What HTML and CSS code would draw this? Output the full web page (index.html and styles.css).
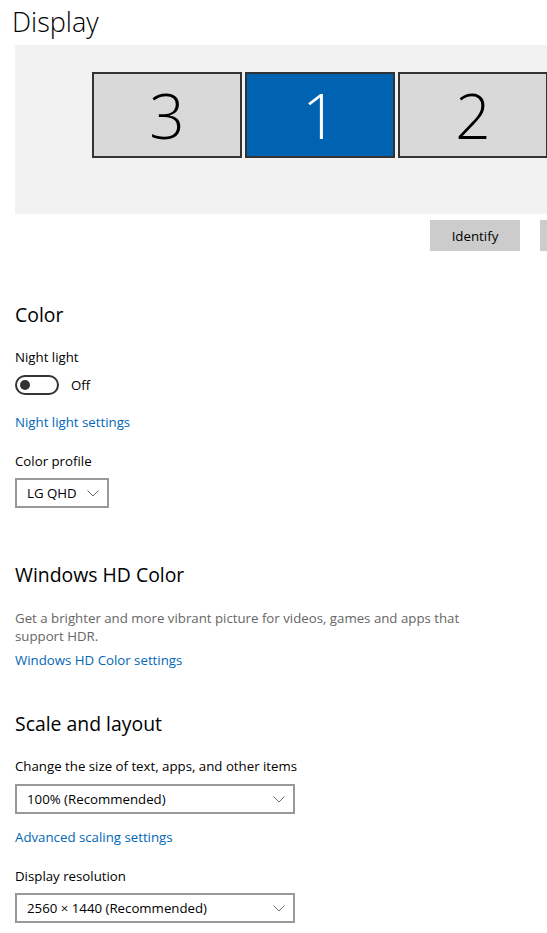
FILE: index.html
```html
<!DOCTYPE html>
<html>
<head>
<meta charset="utf-8">
<link rel="stylesheet" href="styles.css">
</head>
<body>
<div class="page">
  <h1 class="title">Display</h1>
  <div class="arrange">
    <div class="monitors">
      <div class="mon">3</div>
      <div class="mon active">1</div>
      <div class="mon">2</div>
    </div>
  </div>
  <div class="btnrow">
    <div class="btn">Identify</div>
    <div class="btn btn-cut"></div>
  </div>

  <h2 class="heading h-color">Color</h2>
  <div class="label l-night">Night light</div>
  <div class="toggle-row">
    <div class="toggle"><span class="knob"></span></div>
    <span class="toggle-text">Off</span>
  </div>
  <a class="link l-nightset">Night light settings</a>
  <div class="label l-profile">Color profile</div>
  <div class="select small d-profile"><span>LG QHD</span><svg class="chev" width="12" height="7" viewBox="0 0 12 7"><path d="M0.5 0.5 L6 6 L11.5 0.5" fill="none" stroke="#6b6b6b" stroke-width="1"/></svg></div>

  <h2 class="heading h-hd">Windows HD Color</h2>
  <p class="desc">Get a brighter and more vibrant picture for videos, games and apps that support HDR.</p>
  <a class="link l-hdset">Windows HD Color settings</a>

  <h2 class="heading h-scale">Scale and layout</h2>
  <div class="label l-size">Change the size of text, apps, and other items</div>
  <div class="select wide d-scale"><span>100% (Recommended)</span><svg class="chev" width="12" height="7" viewBox="0 0 12 7"><path d="M0.5 0.5 L6 6 L11.5 0.5" fill="none" stroke="#6b6b6b" stroke-width="1"/></svg></div>
  <a class="link l-adv">Advanced scaling settings</a>
  <div class="label l-res">Display resolution</div>
  <div class="select wide d-res"><span>2560 × 1440 (Recommended)</span><svg class="chev" width="12" height="7" viewBox="0 0 12 7"><path d="M0.5 0.5 L6 6 L11.5 0.5" fill="none" stroke="#6b6b6b" stroke-width="1"/></svg></div>
</div>
</body>
</html>
```
FILE: styles.css
```css
html, body {
  margin: 0;
  padding: 0;
  background: #ffffff;
}
body {
  width: 547px;
  height: 933px;
  overflow: hidden;
  font-family: "Open Sans", "Noto Sans", sans-serif;
  color: #000;
}
.page {
  display: flex;
  flex-direction: column;
  align-items: flex-start;
  padding-left: 15px;
}
.title {
  margin: 4px 0 0 -3px;
  font-size: 27px;
  font-weight: 300;
  line-height: 36px;
  height: 36px;
}
.arrange {
  margin-top: 5px;
  width: 532px;
  height: 169px;
  background: #f2f2f2;
  box-sizing: border-box;
  padding: 27px 0 0 77px;
  overflow: hidden;
}
.monitors {
  display: flex;
  gap: 3px;
}
.mon {
  width: 150px;
  height: 86px;
  box-sizing: border-box;
  border: 2px solid #333;
  background: #d9d9d9;
  display: flex;
  align-items: center;
  justify-content: center;
  font-size: 62px;
  font-weight: 300;
  line-height: 1;
  color: #000;
  flex: none;
}
.mon.active {
  background: #0063b1;
  color: #fff;
}
.btnrow {
  margin-top: 6px;
  display: flex;
  gap: 20px;
  padding-left: 415px;
}
.btn {
  width: 90px;
  height: 31px;
  background: #cccccc;
  display: flex;
  align-items: center;
  justify-content: center;
  font-size: 13.3px;
  flex: none;
}
.btn-cut {
  width: 7px;
}
.heading {
  margin: 0;
  font-size: 19.4px;
  font-weight: 400;
  line-height: 26px;
  height: 26px;
}
.label, .link {
  font-size: 13.25px;
  line-height: 20px;
  height: 20px;
  display: block;
}
.link {
  color: #0067b8;
  text-decoration: none;
}
.h-color { margin-top: 51px; }
.l-night { margin-top: 19px; }
.toggle-row {
  margin-top: 8px;
  display: flex;
  align-items: center;
  gap: 12px;
  height: 20px;
}
.toggle {
  width: 44px;
  height: 20px;
  box-sizing: border-box;
  border: 2px solid #333;
  border-radius: 10px;
  display: flex;
  align-items: center;
}
.knob {
  width: 10px;
  height: 10px;
  border-radius: 50%;
  background: #333;
  margin-left: 3px;
}
.toggle-text {
  font-size: 13.25px;
  line-height: 20px;
}
.l-nightset { margin-top: 17px; }
.l-profile { margin-top: 19px; }
.select {
  margin-top: 7px;
  height: 30px;
  box-sizing: border-box;
  border: 2px solid #999;
  display: flex;
  align-items: center;
  justify-content: space-between;
  padding: 0 8px 0 10px;
  font-size: 13.25px;
  line-height: 20px;
}
.select.small { width: 94px; }
.select.wide { width: 280px; }
.chev { flex: none; }
.h-hd { margin-top: 54px; }
.desc {
  margin: 21px 0 0 0;
  width: 460px;
  font-size: 13.25px;
  line-height: 18px;
  color: #666;
}
.l-hdset { margin-top: 5px; }
.h-scale { margin-top: 41px; }
.l-size { margin-top: 19px; }
.d-scale { margin-top: 8px; }
.l-adv { margin-top: 13px; }
.l-res { margin-top: 19px; }
.d-res { margin-top: 7px; }
```
